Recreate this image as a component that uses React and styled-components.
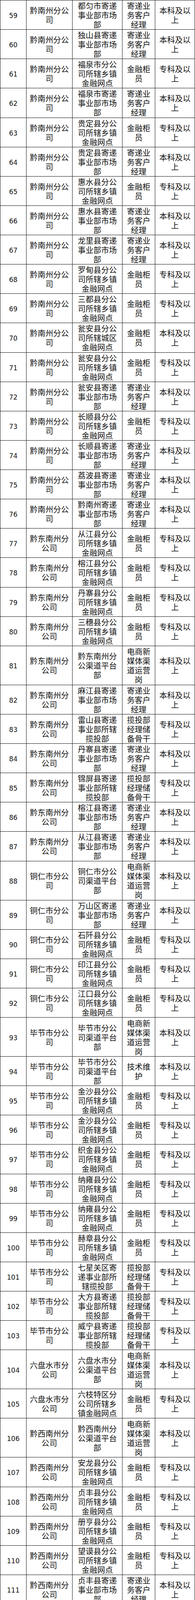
import React from 'react';
import styled, { createGlobalStyle } from 'styled-components';

const rows = [
    [59, '黔南州分公司', '都匀市寄递事业部市场部', '寄递业务客户经理', '本科及以上'],
    [60, '黔南州分公司', '独山县寄递事业部市场部', '寄递业务客户经理', '本科及以上'],
    [61, '黔南州分公司', '福泉市分公司所辖乡镇金融网点', '金融柜员', '专科及以上'],
    [62, '黔南州分公司', '福泉市寄递事业部市场部', '寄递业务客户经理', '本科及以上'],
    [63, '黔南州分公司', '贵定县分公司所辖乡镇金融网点', '金融柜员', '专科及以上'],
    [64, '黔南州分公司', '贵定县寄递事业部市场部', '寄递业务客户经理', '本科及以上'],
    [65, '黔南州分公司', '惠水县分公司所辖乡镇金融网点', '金融柜员', '专科及以上'],
    [66, '黔南州分公司', '惠水县寄递事业部市场部', '寄递业务客户经理', '本科及以上'],
    [67, '黔南州分公司', '龙里县寄递事业部市场部', '寄递业务客户经理', '本科及以上'],
    [68, '黔南州分公司', '罗甸县分公司所辖乡镇金融网点', '金融柜员', '专科及以上'],
    [69, '黔南州分公司', '三都县分公司所辖乡镇金融网点', '金融柜员', '专科及以上'],
    [70, '黔南州分公司', '瓮安县分公司所辖城区金融网点', '金融柜员', '本科及以上'],
    [71, '黔南州分公司', '瓮安县分公司所辖乡镇金融网点', '金融柜员', '专科及以上'],
    [72, '黔南州分公司', '瓮安县寄递事业部市场部', '寄递业务客户经理', '本科及以上'],
    [73, '黔南州分公司', '长顺县分公司所辖乡镇金融网点', '金融柜员', '专科及以上'],
    [74, '黔南州分公司', '长顺县寄递事业部市场部', '寄递业务客户经理', '本科及以上'],
    [75, '黔南州分公司', '荔波县寄递事业部市场部', '寄递业务客户经理', '本科及以上'],
    [76, '黔南州分公司', '黔南州寄递事业部市场部', '寄递业务客户经理', '本科及以上'],
    [77, '黔东南州分公司', '从江县分公司所辖乡镇金融网点', '金融柜员', '专科及以上'],
    [78, '黔东南州分公司', '榕江县分公司所辖乡镇金融网点', '金融柜员', '专科及以上'],
    [79, '黔东南州分公司', '丹寨县分公司所辖乡镇金融网点', '金融柜员', '专科及以上'],
    [80, '黔东南州分公司', '三穗县分公司所辖乡镇金融网点', '金融柜员', '专科及以上'],
    [81, '黔东南州分公司', '黔东南州分公渠道平台部', '电商新媒体渠道运营岗', '本科及以上'],
    [82, '黔东南州分公司', '麻江县寄递事业部市场部', '寄递业务客户经理', '本科及以上'],
    [83, '黔东南州分公司', '雷山县寄递事业部所辖揽投部', '揽投部经理储备骨干', '专科及以上'],
    [84, '黔东南州分公司', '丹寨县寄递事业部市场部', '寄递业务客户经理', '本科及以上'],
    [85, '黔东南州分公司', '锦屏县寄递事业部所辖揽投部', '揽投部经理储备骨干', '专科及以上'],
    [86, '黔东南州分公司', '榕江县寄递事业部市场部', '寄递业务客户经理', '本科及以上'],
    [87, '黔东南州分公司', '从江县寄递事业部市场部', '寄递业务客户经理', '本科及以上'],
    [88, '铜仁市分公司', '铜仁市分公司渠道平台部', '电商新媒体渠道运营岗', '本科及以上'],
    [89, '铜仁市分公司', '万山区寄递事业部市场部', '寄递业务客户经理', '本科及以上'],
    [90, '铜仁市分公司', '石阡县分公司所辖乡镇金融网点', '金融柜员', '专科及以上'],
    [91, '铜仁市分公司', '印江县分公司所辖乡镇金融网点', '金融柜员', '专科及以上'],
    [92, '铜仁市分公司', '江口县分公司所辖乡镇金融网点', '金融柜员', '专科及以上'],
    [93, '毕节市分公司', '毕节市分公司渠道平台部', '电商新媒体渠道运营岗', '本科及以上'],
    [94, '毕节市分公司', '毕节市分公司渠道平台部', '技术维护', '本科及以上'],
    [95, '毕节市分公司', '金沙县分公司所辖乡镇金融网点', '金融柜员', '专科及以上'],
    [96, '毕节市分公司', '金沙县分公司所辖乡镇金融网点', '金融柜员', '专科及以上'],
    [97, '毕节市分公司', '织金县分公司所辖乡镇金融网点', '金融柜员', '专科及以上'],
    [98, '毕节市分公司', '纳雍县分公司所辖乡镇金融网点', '金融柜员', '专科及以上'],
    [99, '毕节市分公司', '纳雍县分公司所辖乡镇金融网点', '金融柜员', '专科及以上'],
    [100, '毕节市分公司', '赫章县分公司所辖乡镇金融网点', '金融柜员', '专科及以上'],
    [101, '毕节市分公司', '七星关区寄递事业部所辖揽投部', '揽投部经理储备骨干', '专科及以上'],
    [102, '毕节市分公司', '大方县寄递事业部所辖揽投部', '揽投部经理储备骨干', '专科及以上'],
    [103, '毕节市分公司', '威宁县寄递事业部所辖揽投部', '揽投部经理储备骨干', '专科及以上'],
    [104, '六盘水市分公司', '六盘水市分公渠道平台部', '电商新媒体渠道运营岗', '本科及以上'],
    [105, '六盘水市分公司', '六枝特区分公司所辖乡镇金融网点', '金融柜员', '专科及以上'],
    [106, '黔西南州分公司', '黔西南州分公渠道平台部', '电商新媒体渠道运营岗', '本科及以上'],
    [107, '黔西南州分公司', '安龙县分公司所辖乡镇金融网点', '金融柜员', '专科及以上'],
    [108, '黔西南州分公司', '贞丰县分公司所辖乡镇金融网点', '金融柜员', '专科及以上'],
    [109, '黔西南州分公司', '册亨县分公司所辖乡镇金融网点', '金融柜员', '专科及以上'],
    [110, '黔西南州分公司', '望谟县分公司所辖乡镇金融网点', '金融柜员', '专科及以上'],
    [111, '黔西南州分公司', '贞丰县寄递事业部市场部', '寄递业务客户经理', '本科及以上'],
    [112, '黔西南州分公司', '兴仁市寄递事业部市场部', '寄递业务客户经理', '本科及以上'],
    [113, '贵阳邮区中心', '贵阳邮区中心邮件处理中心', '安全管理', '本科及以上'],
    [114, '贵阳邮区中心', '贵阳邮区中心邮件处理中心', '邮件作业调度员', '本科及以上'],
    [115, '省物流业务分公司', '省物流业务分公司市场部', '物流客户经理', '本科及以上'],
    [116, '省物流业务分公司', '省物流业务分公司市场部', '物流项目经理', '本科及以上'],
    [117, '省物流业务分公司', '省物流业务分公司运营部', '安全工程师', '本科及以上'],
];

function App() {
    return (
        <>
            <Global />
            <Table>
                {rows.map(([no, unit, dept, post, edu]) => (
                    <Row key={no} $tall={post.length > 9}>
                        <NumCell>{no}</NumCell>
                        <Cell><Text>{unit}</Text></Cell>
                        <Cell><Text>{dept}</Text></Cell>
                        <Cell><Text>{post}</Text></Cell>
                        <Cell><Text>{edu}</Text></Cell>
                    </Row>
                ))}
            </Table>
        </>
    )
}

const Global = createGlobalStyle`
    html, body {
        margin: 0;
        padding: 0;
        background: #fff;
    }
`

const Table = styled.div`
    width: 500px;
    box-sizing: border-box;
    border-top: 1px solid #111;
    border-left: 1px solid #111;
    background: #fff;
`

const Row = styled.div`
    display: grid;
    grid-template-columns: 67px 118px 128px 84px 102px;
    grid-template-rows: 100%;
    height: ${p => p.$tall ? 100 : 75.14}px;
`

const Cell = styled.div`
    box-sizing: border-box;
    min-height: 0;
    height: 100%;
    border-right: 1px solid #111;
    border-bottom: 1px solid #111;
    padding: 2px 6px 0;
    display: flex;
    align-items: center;
    justify-content: center;
    overflow: hidden;
`

const Text = styled.div`
    width: 100%;
    text-align: center;
    font-family: "Noto Sans CJK SC", "Noto Sans CJK JP", sans-serif;
    font-size: 20px;
    line-height: 24px;
    color: #111;
    word-break: break-all;
`

const NumCell = styled(Cell)`
    font-family: "DejaVu Sans", sans-serif;
    font-size: 17px;
    line-height: 20px;
    color: #111;
    padding: 4px 0 0;
`

export default App;
